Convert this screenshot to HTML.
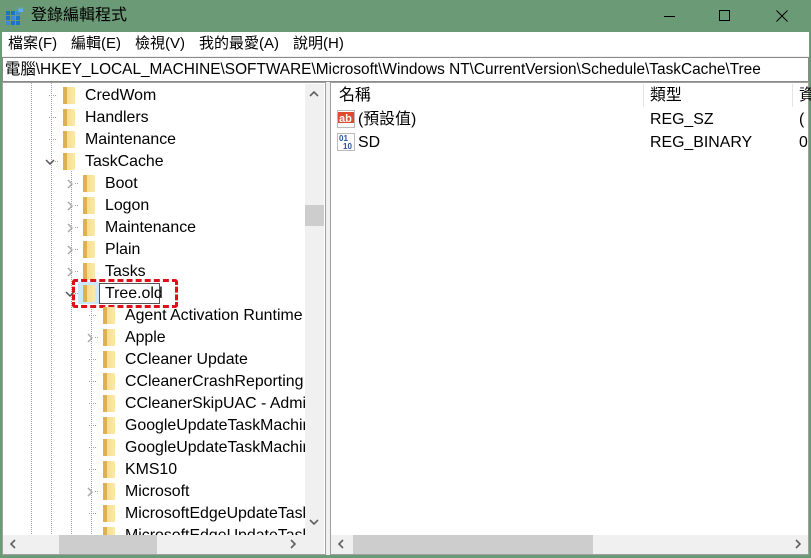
<!DOCTYPE html>
<html><head><meta charset="utf-8"><style>
*{margin:0;padding:0;box-sizing:border-box}
body{width:811px;height:558px;overflow:hidden;background:#6b9a77;font-family:"Liberation Sans","Noto Sans CJK TC",sans-serif;font-size:15px;color:#000;position:relative}
.a{position:absolute}
.t{position:absolute;white-space:nowrap;line-height:22px}
.tr{font-size:15.9px;top:1px}
.fold{position:absolute;width:12px;height:17px;background:linear-gradient(90deg,#e7c56b 0,#f6dc8d 3px,#fbe9a8 100%);border-radius:1px}
.fold:before{content:"";position:absolute;left:0;top:0;width:4px;height:17px;background:#dcb14e}
.dv{position:absolute;border-left:1px dotted #a0a0a0;width:0}
.dh{position:absolute;border-top:1px dotted #a0a0a0;width:7px;height:0}
</style></head><body>
<div class="a" style="left:6px;top:7px;width:18px;height:18px">
<svg width="18" height="18"><rect x="0" y="4" width="4" height="4" fill="#1b74c4"/><rect x="5" y="4" width="4" height="4" fill="#1b74c4"/><rect x="10" y="4" width="4" height="4" fill="#3a8ad4"/><rect x="0" y="9" width="4" height="4" fill="#1b74c4"/><rect x="5" y="9" width="4" height="4" fill="#3a8ad4"/><rect x="10" y="9" width="4" height="4" fill="#1b74c4"/><rect x="0" y="14" width="4" height="4" fill="#3a8ad4"/><rect x="5" y="14" width="4" height="4" fill="#1b74c4"/><rect x="10" y="14" width="4" height="4" fill="#1b74c4"/><path d="M13 0l2 2 2-2v5h-5z" fill="#5fb0f0"/></svg></div>
<div class="t" style="left:31px;top:5px;font-size:16px">登錄編輯程式</div>
<div class="a" style="left:664px;top:16px;width:11px;height:1px;background:#000"></div>
<div class="a" style="left:719px;top:10px;width:11px;height:11px;border:1px solid #000"></div>
<svg class="a" style="left:776px;top:10px" width="12" height="12"><path d="M0.5 0.5L11.5 11.5M11.5 0.5L0.5 11.5" stroke="#000"/></svg>
<div class="a" style="left:0;top:32px;width:811px;height:523px;background:#f0f0f0;border-left:2px solid #6b9a77;border-right:2px solid #6b9a77"></div>
<div class="a" style="left:2px;top:32px;width:807px;height:24px;background:#fff"></div>
<div class="t" style="left:8px;top:33px">檔案(F)</div>
<div class="t" style="left:71px;top:33px">編輯(E)</div>
<div class="t" style="left:135px;top:33px">檢視(V)</div>
<div class="t" style="left:199px;top:33px">我的最愛(A)</div>
<div class="t" style="left:293px;top:33px">說明(H)</div>
<div class="a" style="left:2px;top:57px;width:807px;height:25px;background:#fff;border:1px solid #8a8a8a"></div>
<div class="t" style="left:5px;top:59px;font-size:15.4px">電腦\HKEY_LOCAL_MACHINE\SOFTWARE\Microsoft\Windows NT\CurrentVersion\Schedule\TaskCache\Tree</div>
<div class="a" style="left:2px;top:82px;width:324px;height:473px;background:#fff;border:1px solid #a0a0a0;overflow:hidden">
<div class="dv" style="left:28px;top:0;height:455px"></div>
<div class="dv" style="left:48px;top:0;height:455px"></div>
<div class="dv" style="left:68px;top:88px;height:367px"></div>
<div class="dv" style="left:88px;top:220px;height:235px"></div>
</div>
<div style="position:absolute;left:0;top:0;width:305px;height:535px;overflow:hidden">
<script>
var rows=[[0,"CredWom",0],[0,"Handlers",0],[0,"Maintenance",0],[0,"TaskCache",2],[1,"Boot",1],[1,"Logon",1],[1,"Maintenance",1],[1,"Plain",1],[1,"Tasks",1],[1,"Tree.old",3],[2,"Agent Activation Runtime",0],[2,"Apple",1],[2,"CCleaner Update",0],[2,"CCleanerCrashReporting",0],[2,"CCleanerSkipUAC - Administrator",0],[2,"GoogleUpdateTaskMachineCore",0],[2,"GoogleUpdateTaskMachineUA",0],[2,"KMS10",0],[2,"Microsoft",1],[2,"MicrosoftEdgeUpdateTaskMachineCore",0],[2,"MicrosoftEdgeUpdateTaskMachineUA",0]];
var h="";
rows.forEach(function(r,i){var top=84+22*i,L=r[0],fx=63+20*L,tx=85+20*L,cx=46+20*L;
if(r[2]==0)h+='<div class="dh" style="left:'+(cx+3)+'px;top:'+(top+11)+'px"></div>';
else h+='<div class="dh" style="left:'+(cx+9)+'px;top:'+(top+11)+'px;width:3px"></div>';
if(r[2]==1)h+='<svg class="a" style="left:'+(cx+1)+'px;top:'+(top+7)+'px" width="6" height="10"><path d="M1 1L5 5 1 9" stroke="#a8a8a8" stroke-width="1.5" fill="none"/></svg>';
if(r[2]>=2)h+='<svg class="a" style="left:'+(cx-1)+'px;top:'+(top+9)+'px" width="10" height="6"><path d="M1 1L5 5 9 1" stroke="#555" stroke-width="1.5" fill="none"/></svg>';
if(r[2]==3){h+='<div class="a" style="left:'+(fx-5)+'px;top:'+top+'px;width:22px;height:22px;background:#cce8ff"></div>';}
h+='<div class="fold" style="left:'+fx+'px;top:'+(top+3)+'px"></div>';
if(r[2]==3){h+='<div class="a" style="left:99px;top:'+(top+1)+'px;width:61px;height:21px;border:1px solid #555;background:#fff"></div>';
h+='<div class="a" style="left:72px;top:'+(top-3)+'px;width:106px;height:29px;border:3px dashed #e0101a;border-radius:3px"></div>';}
h+='<div class="t" style="left:'+tx+'px;top:'+(top+1)+'px;font-size:15.9px">'+r[1]+'</div>';});
document.write(h);
</script>
</div>
<div class="a" style="left:305px;top:84px;width:19px;height:451px;background:#f0f0f0"></div>
<div class="a" style="left:305px;top:205px;width:19px;height:21px;background:#cdcdcd"></div>
<svg class="a" style="left:309px;top:90px" width="10" height="7"><path d="M1 6L5 2 9 6" stroke="#606060" stroke-width="1.6" fill="none"/></svg>
<svg class="a" style="left:309px;top:519px" width="10" height="7"><path d="M1 1L5 5 9 1" stroke="#606060" stroke-width="1.6" fill="none"/></svg>
<div class="a" style="left:3px;top:535px;width:302px;height:19px;background:#f0f0f0"></div>
<div class="a" style="left:59px;top:535px;width:98px;height:19px;background:#cdcdcd"></div>
<svg class="a" style="left:9px;top:539px" width="7" height="10"><path d="M6 1L2 5 6 9" stroke="#606060" stroke-width="1.6" fill="none"/></svg>
<svg class="a" style="left:290px;top:539px" width="7" height="10"><path d="M1 1L5 5 1 9" stroke="#606060" stroke-width="1.6" fill="none"/></svg>
<div class="a" style="left:305px;top:535px;width:19px;height:19px;background:#f0f0f0"></div>
<div class="a" style="left:330px;top:82px;width:479px;height:473px;background:#fff;border:1px solid #a0a0a0"></div>
<div class="a" style="left:643px;top:84px;width:1px;height:23px;background:#e5e5e5"></div>
<div class="a" style="left:792px;top:84px;width:1px;height:23px;background:#e5e5e5"></div>
<div class="t" style="left:339px;top:85px;font-size:15.9px">名稱</div>
<div class="t" style="left:650px;top:85px;font-size:15.9px">類型</div>
<div class="t" style="left:799px;top:85px;font-size:15.9px">資</div>
<svg class="a" style="left:337px;top:110px" width="18" height="18"><rect x="0.5" y="0.5" width="17" height="17" fill="#fff" stroke="#bbb"/><rect x="1" y="2" width="16" height="11" fill="#e04a2f"/><text x="2" y="12" font-size="11" font-weight="bold" fill="#fff" font-family="Liberation Sans">ab</text></svg>
<div class="t" style="left:358px;top:109px;font-size:15.9px">(預設值)</div>
<div class="t" style="left:650px;top:109px;font-size:15.9px">REG_SZ</div>
<div class="t" style="left:799px;top:109px;font-size:15.9px">(</div>
<svg class="a" style="left:337px;top:133px" width="18" height="18"><rect x="0.5" y="0.5" width="17" height="17" fill="#fff" stroke="#bbb"/><text x="2" y="8" font-size="8" font-weight="bold" fill="#2b4fa0" font-family="Liberation Sans">01</text><text x="6" y="16" font-size="8" font-weight="bold" fill="#2b4fa0" font-family="Liberation Sans">10</text></svg>
<div class="t" style="left:358px;top:132px;font-size:15.9px">SD</div>
<div class="t" style="left:650px;top:132px;font-size:15.9px">REG_BINARY</div>
<div class="t" style="left:799px;top:132px;font-size:15.9px">0</div>
<div class="a" style="left:331px;top:535px;width:477px;height:19px;background:#f0f0f0"></div>
<div class="a" style="left:353px;top:535px;width:240px;height:19px;background:#cdcdcd"></div>
<svg class="a" style="left:337px;top:539px" width="7" height="10"><path d="M6 1L2 5 6 9" stroke="#606060" stroke-width="1.6" fill="none"/></svg>
<svg class="a" style="left:795px;top:539px" width="7" height="10"><path d="M1 1L5 5 1 9" stroke="#606060" stroke-width="1.6" fill="none"/></svg>
</body></html>
